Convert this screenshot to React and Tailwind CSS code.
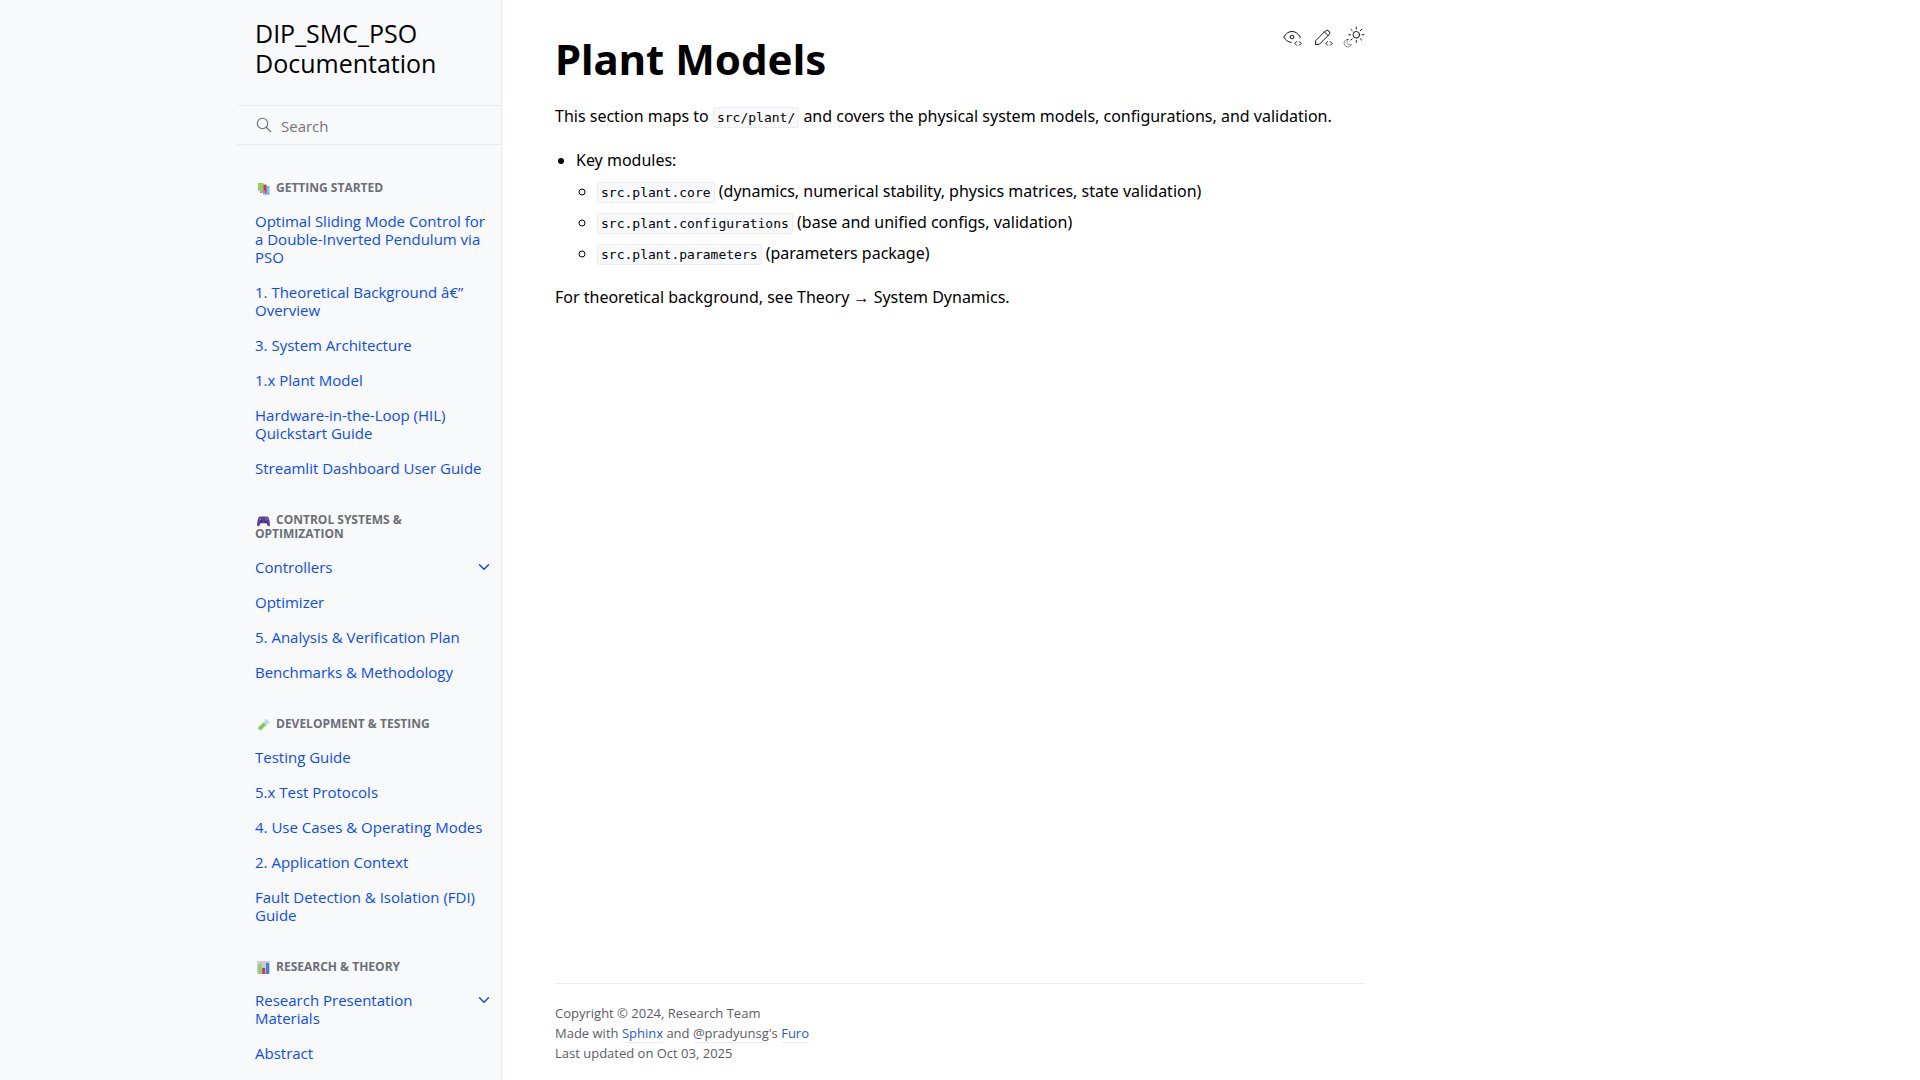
const iconProps = {
  viewBox: "0 0 24 24",
  fill: "none",
  stroke: "currentColor",
  strokeWidth: 1,
  strokeLinecap: "round",
  strokeLinejoin: "round",
  "aria-hidden": true,
};

const EyeCodeIcon = () => (
  <svg {...iconProps} className="size-[22px]">
    <path d="M10 12a2 2 0 1 0 4 0a2 2 0 0 0 -4 0" />
    <path d="M11.11 17.958c-3.209 -.307 -5.91 -2.293 -8.11 -5.958c2.4 -4 5.4 -6 9 -6c3.6 0 6.6 2 9 6c-.21 .352 -.427 .688 -.647 1.008" />
    <path d="M20 21l2 -2l-2 -2" />
    <path d="M17 17l-2 2l2 2" />
  </svg>
);

const PencilCodeIcon = () => (
  <svg {...iconProps} className="size-[22px]">
    <path d="M4 20h4l10.5 -10.5a2.828 2.828 0 1 0 -4 -4l-10.5 10.5v4" />
    <path d="M13.5 6.5l4 4" />
    <path d="M20 21l2 -2l-2 -2" />
    <path d="M17 17l-2 2l2 2" />
  </svg>
);

const SunMoonIcon = () => (
  <svg {...iconProps} className="size-[22px]">
    <path
      strokeWidth=".5"
      d="M5.411 14.504C5.471 14.504 5.532 14.504 5.591 14.504C3.639 16.319 4.383 19.569 6.931 20.352C7.693 20.586 8.512 20.551 9.25 20.252C8.023 23.207 4.056 23.725 2.11 21.184C0.166 18.642 1.702 14.949 4.874 14.536C5.051 14.512 5.231 14.5 5.411 14.5Z"
    />
    <circle cx="14.5" cy="9.55" r="3.6" />
    <path d="M14.5 3.25V1.25M14.5 15.85V17.85M10.044 5.094L8.63 3.68M19 14.05L20.414 15.464M8.2 9.55H6.2M20.8 9.55H22.8M10.044 14.006L8.63 15.42M19 5.05L20.414 3.636" />
  </svg>
);

const SearchIcon = () => (
  <svg {...iconProps} strokeWidth="1.5" className="size-[18px] shrink-0">
    <circle cx="10" cy="10" r="7" />
    <path d="M21 21l-6 -6" />
  </svg>
);

const ChevronIcon = () => (
  <svg {...iconProps} strokeWidth="2" className="size-[18px]">
    <path d="M6 9l6 6l6 -6" />
  </svg>
);

const emoji = "inline-block size-[13px] ml-[2px] mr-[6px] align-[-3px]";

const BooksIcon = () => (
  <svg viewBox="0 0 13 13" className={emoji} aria-hidden="true">
    <path d="M7 4h5.500v8.500H7z" fill="#6cc4f5" />
    <path d="M6 11h6.500v1.500H6z" fill="#8ea6e0" />
    <path d="M5 2.500h4.500V11H5z" fill="#d8305f" />
    <path d="M3 8.500h5V11H3z" fill="#b48fc4" />
    <path d="M1 1h5.500v7.500H1z" fill="#86d84f" />
    <path d="M1 7h5.500v1.500H1z" fill="#a5bb9c" />
  </svg>
);

const GamepadIcon = () => (
  <svg viewBox="0 0 13 13" className={emoji} aria-hidden="true">
    <path d="M3 2.500h7c1.200 0 1.600 1 2 2.600.5 2.100 1 4.300 1 5.900 0 1.500-1.900 1.600-2.600.2L9.500 9.200h-6L2.600 11.200C1.900 12.600 0 12.500 0 11c0-1.600.5-3.800 1-5.900.4-1.600.8-2.600 2-2.600z" fill="#5a3f9c" />
    <circle cx="4.300" cy="7.700" r="1.200" fill="#3f2b73" />
    <circle cx="8.700" cy="7.700" r="1.200" fill="#3f2b73" />
    <circle cx="3.300" cy="5" r="1" fill="#8a78c4" />
    <circle cx="9" cy="4.200" r=".6" fill="#6fd0a0" />
    <circle cx="10.300" cy="5.300" r=".6" fill="#e0668c" />
    <circle cx="9" cy="6" r=".6" fill="#5fa8e8" />
  </svg>
);

const TestTubeIcon = () => (
  <svg viewBox="0 0 13 13" className={emoji} aria-hidden="true">
    <path d="M8.500 1.500l3.500 3.500-1.500.8L4.600 11.700c-2 1.700-4.600-.6-3-2.800L8 2.800z" fill="#b9dcf5" />
    <path d="M6 4.800l4 1.500-5.600 5.500c-1.900 1.300-4.100-.7-2.800-2.700z" fill="#86d84f" />
    <path d="M8 1.500L9 1l3.500 3.700-.8.700z" fill="#9ccdf2" />
    <circle cx="4" cy="9" r=".7" fill="#4fa52f" />
    <circle cx="6.500" cy="7" r=".6" fill="#4fa52f" />
  </svg>
);

const BarChartIcon = () => (
  <svg viewBox="0 0 13 13" className={emoji} aria-hidden="true">
    <rect width="13" height="13" rx="1" fill="#cfc9d6" />
    <rect x="1.500" y="3" width="3" height="10" fill="#7fd653" />
    <rect x="5.200" y="7" width="3" height="6" fill="#d8305f" />
    <rect x="9" y="2" width="3" height="11" fill="#2f88d8" />
  </svg>
);

const sections = [
  {
    title: "Getting Started",
    Icon: BooksIcon,
    items: [
      { label: "Optimal Sliding Mode Control for a Double-Inverted Pendulum via PSO" },
      { label: "1. Theoretical Background \u00e2\u20ac\u201d Overview" },
      { label: "3. System Architecture" },
      { label: "1.x Plant Model" },
      { label: "Hardware-in-the-Loop (HIL) Quickstart Guide" },
      { label: "Streamlit Dashboard User Guide" },
    ],
  },
  {
    title: "Control Systems & Optimization",
    Icon: GamepadIcon,
    items: [
      { label: "Controllers", expandable: true },
      { label: "Optimizer" },
      { label: "5. Analysis & Verification Plan" },
      { label: "Benchmarks & Methodology" },
    ],
  },
  {
    title: "Development & Testing",
    Icon: TestTubeIcon,
    items: [
      { label: "Testing Guide" },
      { label: "5.x Test Protocols" },
      { label: "4. Use Cases & Operating Modes" },
      { label: "2. Application Context" },
      { label: "Fault Detection & Isolation (FDI) Guide" },
    ],
  },
  {
    title: "Research & Theory",
    Icon: BarChartIcon,
    items: [
      { label: "Research Presentation Materials", expandable: true },
      { label: "Abstract" },
    ],
  },
];

const modules = [
  ["src.plant.core", "(dynamics, numerical stability, physics matrices, state validation)"],
  ["src.plant.configurations", "(base and unified configs, validation)"],
  ["src.plant.parameters", "(parameters package)"],
];

const Code = ({ children }) => (
  <code className="rounded-[3px] border border-[#eeebee] bg-[#f8f9fb] px-[3px] py-[2px] font-['DejaVu_Sans_Mono',monospace] text-[13px] leading-5">
    {children}
  </code>
);

function NavItem({ label, expandable }) {
  return (
    <li className="flex items-start">
      <a href="#" className="flex-1 pt-2 pr-2 pb-[9px] text-[15px] leading-[18px] text-[#0a4bff]">
        {label}
      </a>
      {expandable && (
        <button type="button" aria-label={`Expand ${label}`} className="flex h-[34px] w-[34px] items-center justify-center text-[#0a4bff]">
          <ChevronIcon />
        </button>
      )}
    </li>
  );
}

function Sidebar() {
  return (
    <aside className="sticky top-0 flex h-screen w-[calc(50%-458px)] min-w-[265px] shrink-0 justify-end border-r border-[#eeebee] bg-[#f8f9fb] font-['Open_Sans',sans-serif]">
      <div className="h-full w-[264px] overflow-y-auto [scrollbar-width:none]">
        <a href="#" className="block px-[18px] pt-[18px] pb-[27px] text-[25px] leading-[30px] text-black">
          DIP_SMC_PSO Documentation
        </a>
        <form role="search" className="flex h-10 items-start border-y border-[#eeebee] pt-[10px] pl-[18px] text-[#6b6f76]">
          <SearchIcon />
          <input
            type="search"
            aria-label="Search"
            placeholder="Search"
            className="ml-2 w-full bg-transparent text-[15px] leading-5 outline-none placeholder:text-[#757575]"
          />
        </form>
        <nav aria-label="Documentation" className="pt-[9px]">
          {sections.map(({ title, Icon, items }) => (
            <section key={title} className="pt-[27px] pl-[18px]">
              <h2 className="pr-[18px] pb-[9px] text-[12px] leading-[14px] font-bold text-[#6b6f76] uppercase">
                <Icon />
                {title}
              </h2>
              <ul>
                {items.map((item) => (
                  <NavItem key={item.label} {...item} />
                ))}
              </ul>
            </section>
          ))}
        </nav>
      </div>
    </aside>
  );
}

const FooterLink = ({ children }) => (
  <a href="#" className="border-b border-[#eeebee] text-[#2757dd]">
    {children}
  </a>
);

export default function App() {
  return (
    <div className="flex min-h-screen bg-white font-['Noto_Sans',sans-serif] text-black">
      <Sidebar />
      <div className="mx-[53px] flex min-w-0 max-w-[810px] flex-1 flex-col">
        <main className="flex-1 pt-[26px] text-base leading-[27px]">
          <div className="float-right flex gap-[9px] text-black">
            <a href="#" aria-label="View this page"><EyeCodeIcon /></a>
            <a href="#" aria-label="Edit this page"><PencilCodeIcon /></a>
            <button type="button" aria-label="Toggle light and dark theme" className="flex items-start"><SunMoonIcon /></button>
          </div>
          <h1 className="pt-[5px] text-[42px] leading-[55px] font-bold">Plant Models</h1>
          <p className="mt-[17px]">
            This section maps to <Code>src/plant/</Code> and covers the physical system models, configurations, and validation.
          </p>
          <ul className="mt-[17px] list-disc pl-[21px]">
            <li>
              Key modules:
              <ul className="mt-1 flex list-[circle] flex-col gap-1 pl-[21px]">
                {modules.map(([name, text]) => (
                  <li key={name}>
                    <Code>{name}</Code> {text}
                  </li>
                ))}
              </ul>
            </li>
          </ul>
          <p className="mt-[17px]">For theoretical background, see Theory → System Dynamics.</p>
        </main>
        <footer className="border-t border-[#eeebee] pt-[19px] pb-[17px] font-['Open_Sans',sans-serif] text-[13px] leading-5 text-[#5a5c63]">
          <p>Copyright © 2024, Research Team</p>
          <p>
            Made with <FooterLink>Sphinx</FooterLink> and{" "}
            <a href="#" className="border-b border-[#eeebee]">@pradyunsg</a>'s{" "}
            <FooterLink>Furo</FooterLink>
          </p>
          <p>Last updated on Oct 03, 2025</p>
        </footer>
      </div>
    </div>
  );
}
